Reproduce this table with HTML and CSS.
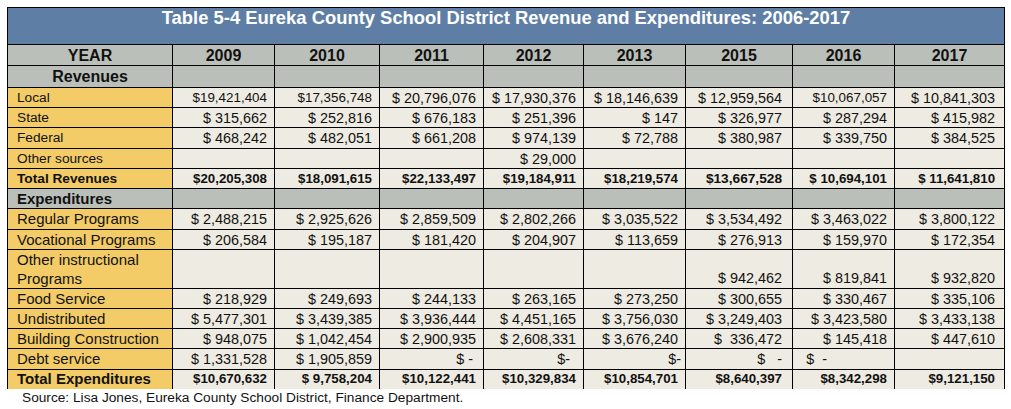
FILE: index.html
```
<!DOCTYPE html>
<html>
<head>
<meta charset="utf-8">
<link rel="stylesheet" href="styles.css">
</head>
<body>
<div class="page">
<table class="tbl">
<colgroup>
<col class="c0"><col class="c1"><col class="c2"><col class="c3"><col class="c4"><col class="c5"><col class="c6"><col class="c7"><col class="c8">
</colgroup>
<tr class="r-title"><th colspan="9" class="title">Table 5-4 Eureka County School District Revenue and Expenditures: 2006-2017</th></tr>
<tr class="r-year gray"><th>YEAR</th><th>2009</th><th>2010</th><th>2011</th><th>2012</th><th>2013</th><th>2015</th><th>2016</th><th>2017</th></tr>
<tr class="r-rev gray"><th class="sec">Revenues</th><td></td><td></td><td></td><td></td><td></td><td></td><td></td><td></td></tr>
<tr class="r20 rv"><th class="lbl">Local</th><td class="sm">$19,421,404</td><td class="sm">$17,356,748</td><td>$ 20,796,076</td><td>$ 17,930,376</td><td>$ 18,146,639</td><td>$ 12,959,564</td><td class="sm">$10,067,057</td><td>$ 10,841,303</td></tr>
<tr class="r20 rv"><th class="lbl">State</th><td>$ 315,662</td><td>$ 252,816</td><td>$ 676,183</td><td>$ 251,396</td><td>$ 147</td><td>$ 326,977</td><td>$ 287,294</td><td>$ 415,982</td></tr>
<tr class="r21 rv"><th class="lbl">Federal</th><td>$ 468,242</td><td>$ 482,051</td><td>$ 661,208</td><td>$ 974,139</td><td>$ 72,788</td><td>$ 380,987</td><td>$ 339,750</td><td>$ 384,525</td></tr>
<tr class="r20 rv"><th class="lbl">Other sources</th><td></td><td></td><td></td><td>$ 29,000</td><td></td><td></td><td></td><td></td></tr>
<tr class="r20 rv tot"><th class="lbl">Total Revenues</th><td>$20,205,308</td><td>$18,091,615</td><td>$22,133,497</td><td>$19,184,911</td><td>$18,219,574</td><td class="low">$13,667,528</td><td>$ 10,694,101</td><td>$ 11,641,810</td></tr>
<tr class="r20 gray"><th class="sec2">Expenditures</th><td></td><td></td><td></td><td></td><td></td><td></td><td></td><td></td></tr>
<tr class="r21 ex"><th class="lbl">Regular Programs</th><td>$ 2,488,215</td><td>$ 2,925,626</td><td>$ 2,859,509</td><td>$ 2,802,266</td><td>$ 3,035,522</td><td>$ 3,534,492</td><td>$ 3,463,022</td><td>$ 3,800,122</td></tr>
<tr class="r20 ex"><th class="lbl">Vocational Programs</th><td>$ 206,584</td><td>$ 195,187</td><td>$ 181,420</td><td>$ 204,907</td><td>$ 113,659</td><td>$ 276,913</td><td>$ 159,970</td><td>$ 172,354</td></tr>
<tr class="r39 ex"><th class="lbl">Other instructional<br>Programs</th><td></td><td></td><td></td><td></td><td></td><td>$ 942,462</td><td>$ 819,841</td><td>$ 932,820</td></tr>
<tr class="r20 ex"><th class="lbl">Food Service</th><td>$ 218,929</td><td>$ 249,693</td><td>$ 244,133</td><td>$ 263,165</td><td>$ 273,250</td><td>$ 300,655</td><td>$ 330,467</td><td>$ 335,106</td></tr>
<tr class="r20 ex"><th class="lbl">Undistributed</th><td>$ 5,477,301</td><td>$ 3,439,385</td><td>$ 3,936,444</td><td>$ 4,451,165</td><td>$ 3,756,030</td><td>$ 3,249,403</td><td>$ 3,423,580</td><td>$ 3,433,138</td></tr>
<tr class="r20 ex"><th class="lbl">Building Construction</th><td>$ 948,075</td><td>$ 1,042,454</td><td>$ 2,900,935</td><td>$ 2,608,331</td><td>$ 3,676,240</td><td>$  336,472</td><td>$ 145,418</td><td>$ 447,610</td></tr>
<tr class="r21 ex"><th class="lbl">Debt service</th><td>$ 1,331,528</td><td>$ 1,905,859</td><td class="d11">$ -</td><td class="d12">$-</td><td class="d13">$-</td><td>$   -</td><td class="d16">$  -</td><td></td></tr>
<tr class="r19 ex tot last"><th class="lbl">Total Expenditures</th><td>$10,670,632</td><td>$ 9,758,204</td><td>$10,122,441</td><td>$10,329,834</td><td>$10,854,701</td><td>$8,640,397</td><td>$8,342,298</td><td>$9,121,150</td></tr>
</table>
<p class="source">Source: Lisa Jones, Eureka County School District, Finance Department.</p>
</div>
</body>
</html>
```

FILE: styles.css
```
html, body {
  margin: 0;
  padding: 0;
  background: #ffffff;
}
.page {
  padding: 7px 0 0 7px;
  font-family: "Liberation Sans", Arial, sans-serif;
  color: #111;
}
.tbl {
  border-collapse: collapse;
  table-layout: fixed;
  width: 998px;
}
.c0 { width: 165px; }
.c1 { width: 102px; }
.c2 { width: 105px; }
.c3 { width: 104px; }
.c4 { width: 100px; }
.c5 { width: 102px; }
.c6 { width: 107px; }
.c7 { width: 102px; }
.c8 { width: 110px; }
.tbl th, .tbl td {
  border: 1px solid #000;
  padding: 0;
  overflow: hidden;
  white-space: pre;
}
.tbl td {
  background: #eeebe2;
  text-align: right;
  padding-right: 7px;
  font-size: 14.4px;
  line-height: 18px;
  vertical-align: middle;
}
.tbl td:nth-child(7) { padding-right: 10px; }
.tbl td:nth-child(9) { padding-right: 9px; }
.r-title { height: 37px; }
.title {
  background: #5e7ea5;
  color: #fff;
  font-size: 18.4px;
  font-weight: bold;
  text-align: center;
  vertical-align: top;
  padding-top: 5px;
  line-height: 20px;
}
.r-year { height: 21px; }
.r-rev { height: 22px; }
.r20 { height: 20px; }
.r21 { height: 21px; }
.r19 { height: 19px; }
.r39 { height: 39px; }
.gray th, .gray td {
  background: #bbbfb9;
}
.r-year th {
  font-size: 16px;
  font-weight: bold;
  text-align: center;
  line-height: 19px;
}
.sec {
  font-size: 16px;
  font-weight: bold;
  text-align: center;
  line-height: 20px;
}
.sec2 {
  font-size: 15px;
  font-weight: bold;
  text-align: left;
  padding-left: 9px !important;
  line-height: 18px;
}
.lbl {
  background: #f3cc67;
  text-align: left;
  font-weight: normal;
  padding-left: 9px !important;
  line-height: 18px;
  white-space: normal !important;
}
.rv .lbl { font-size: 13.7px; }
.ex .lbl { font-size: 15px; }
.r39 .lbl { line-height: 19px; vertical-align: bottom; }
.r39 td { vertical-align: bottom; padding-bottom: 1px; }
.tbl .sm { font-size: 13.4px; }
.tot .lbl { font-weight: bold; }
.rv.tot .lbl { font-size: 13.7px; }
.ex.tot .lbl { font-size: 15px; }
.tot td { font-weight: bold; font-size: 13.3px; }
.tot td.low { vertical-align: bottom; font-size: 13.7px; }
.last th, .last td { border-bottom: none; }
.tbl td.d11 { padding-right: 10px; }
.tbl td.d12 { padding-right: 13px; }
.tbl td.d13 { padding-right: 4px; }
.tbl td.d16 { padding-right: 67px; }
.source {
  margin: 0;
  padding: 1px 0 0 15px;
  font-size: 13.7px;
  line-height: 16px;
}
```
